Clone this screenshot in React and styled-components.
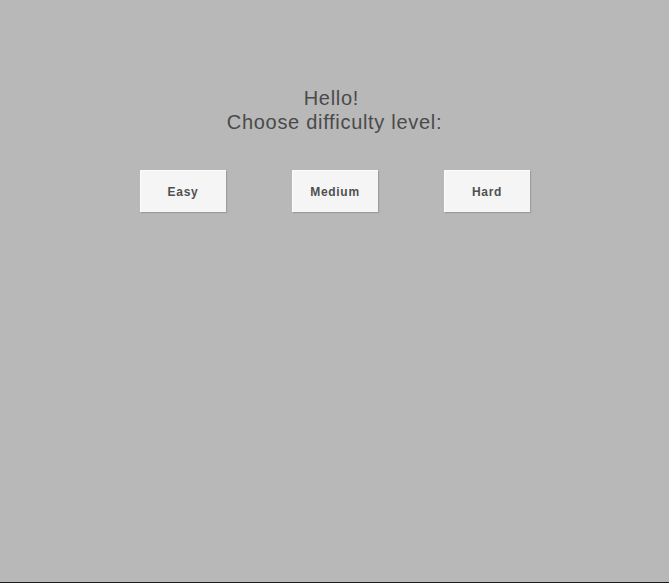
import React from 'react';
import styled, { createGlobalStyle } from 'styled-components';

const GlobalStyle = createGlobalStyle`
  html, body {
    margin: 0;
    padding: 0;
    background: #b8b8b8;
  }
`;

const Screen = styled.div`
  box-sizing: border-box;
  height: 583px;
  padding-top: 86px;
  background: #b8b8b8;
  border-bottom: 1px solid #1c1c1c;
  font-family: 'Liberation Sans', Arial, sans-serif;
`;

const Title = styled.h1`
  margin: 0;
  text-align: center;
  font-size: 20px;
  line-height: 24px;
  font-weight: 400;
  letter-spacing: 0.7px;
  color: #4a4a4a;
`;

const Choices = styled.div`
  display: flex;
  justify-content: center;
  gap: 66px;
  margin-top: 36px;
`;

const Choice = styled.button`
  width: 86px;
  height: 42px;
  padding: 0;
  background: #f5f5f5;
  border: none;
  border-top: 1px solid #fbfbfb;
  border-left: 1px solid #fbfbfb;
  box-shadow: 1px 1px 1px rgba(0, 0, 0, 0.15);
  font-family: 'Liberation Sans', Arial, sans-serif;
  font-size: 12px;
  font-weight: 700;
  letter-spacing: 0.7px;
  color: #505050;
  cursor: pointer;
`;

const levels = ['Easy', 'Medium', 'Hard'];

const App = () => (
  <>
    <GlobalStyle />
    <Screen>
      <Title>
        Hello!{'\u00a0'}
        <br />
        Choose difficulty level:
      </Title>
      <Choices>
        {levels.map((level) => (
          <Choice key={level}>{level}</Choice>
        ))}
      </Choices>
    </Screen>
  </>
);

export default App;
